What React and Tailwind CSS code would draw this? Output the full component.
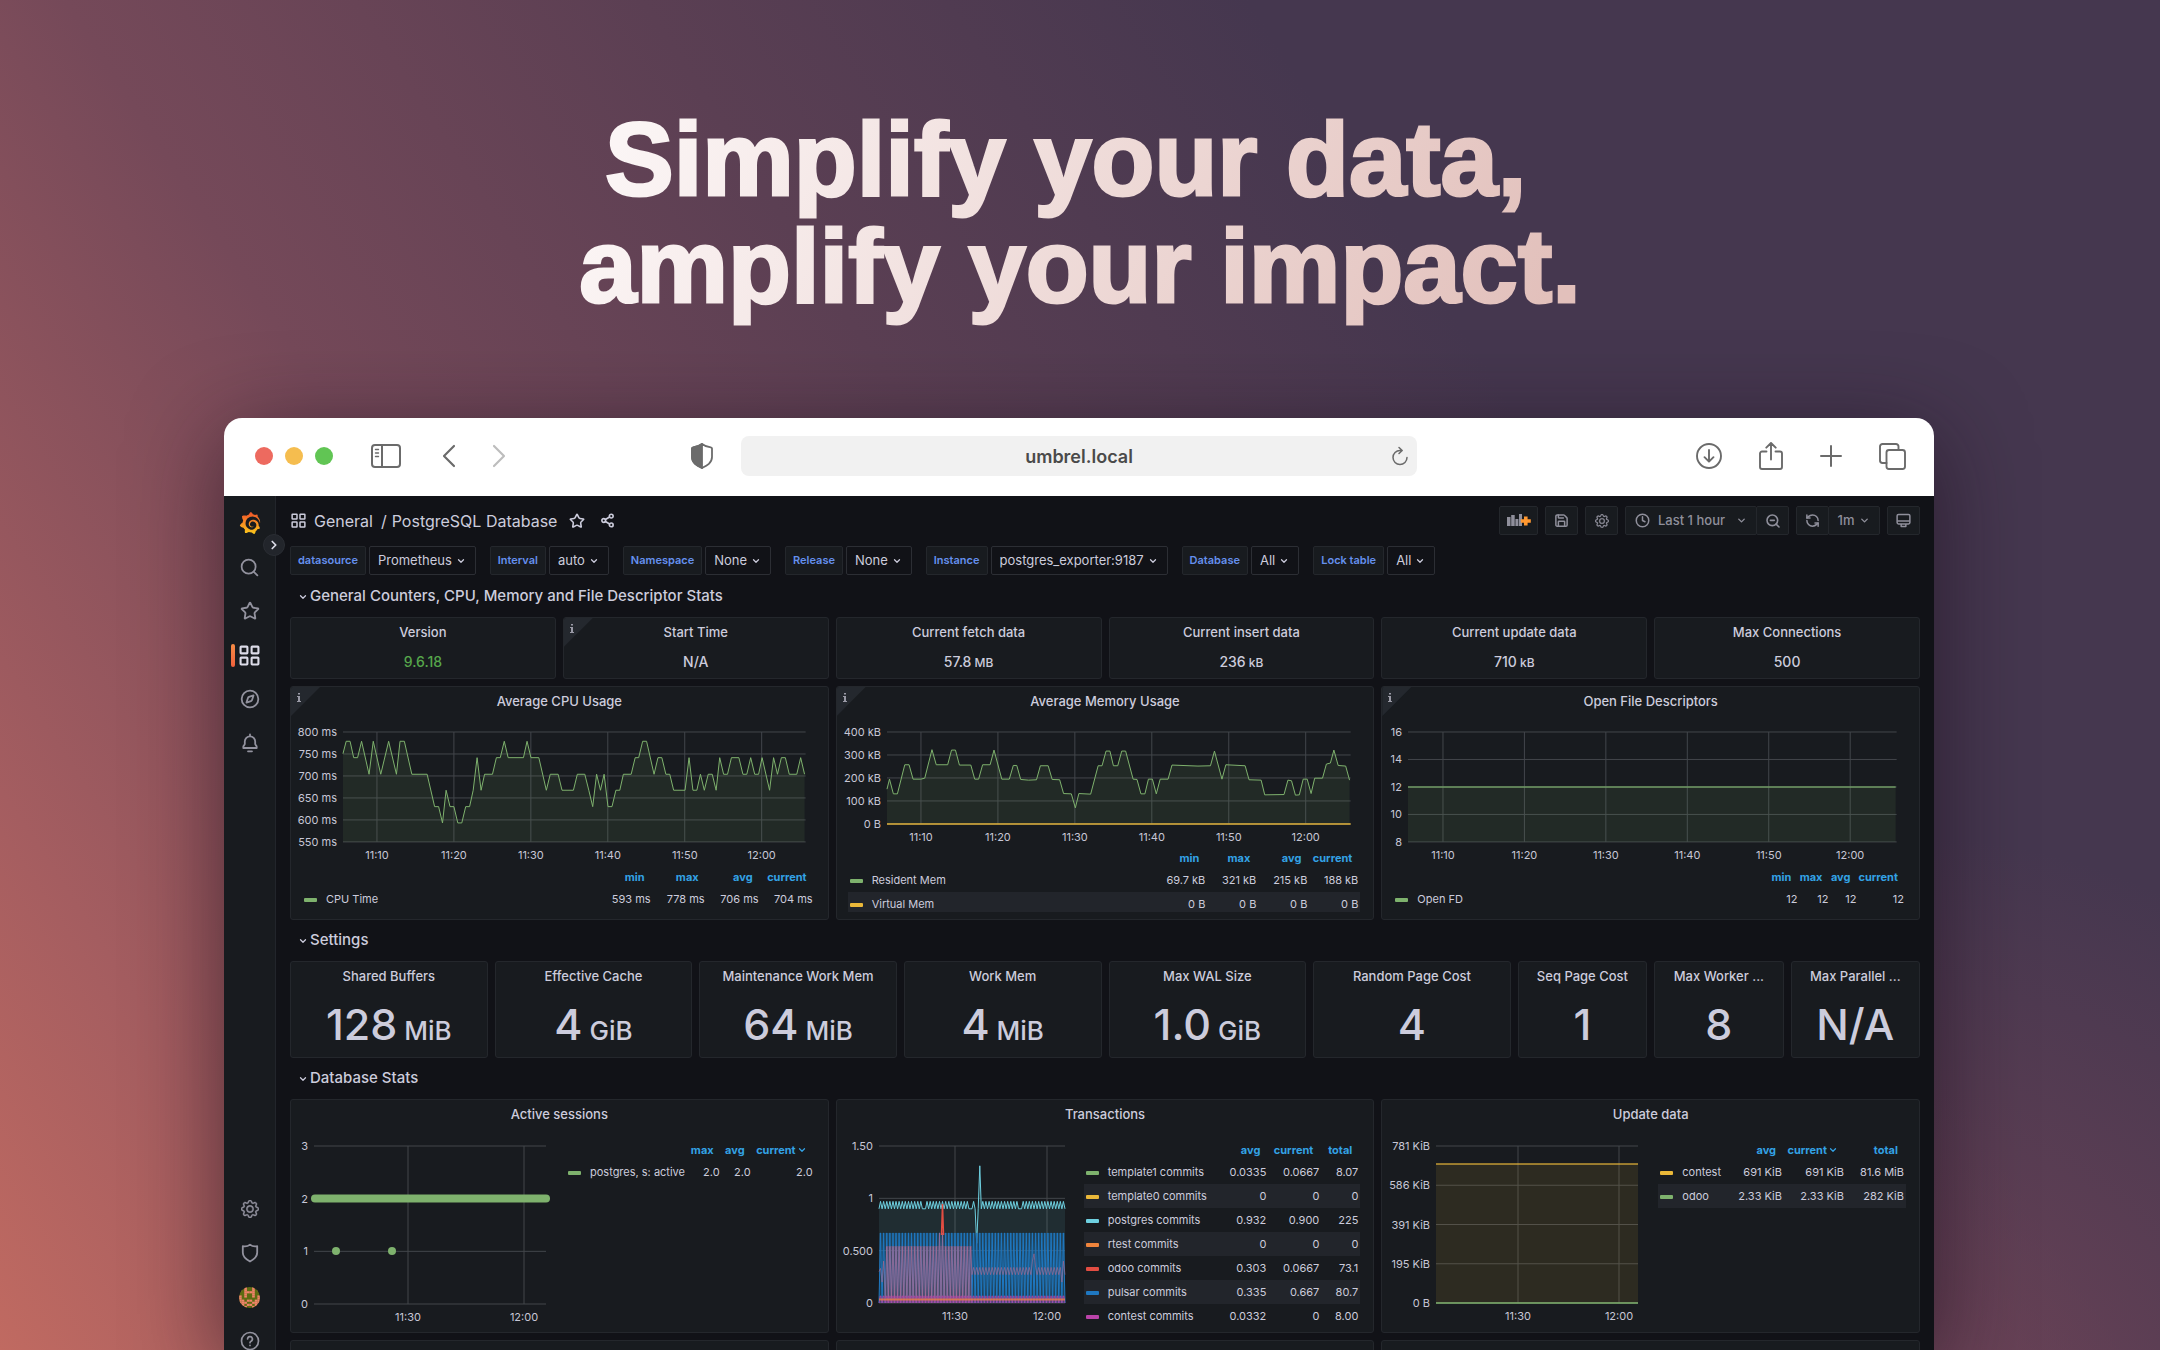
import React from "react";
import { SiGrafana } from "react-icons/si";
import { BsGear } from "react-icons/bs";
import { Search, Star, Compass, Bell, Clock, ZoomOut, RefreshCw, Share2, Save, ChevronDown, ChevronRight } from "lucide-react";

const GREEN = "#7eb26d";
const YELLOW = "#eab839";
const CYAN = "#6ed0e0";
const ORANGE = "#ef843c";
const RED = "#e24d42";
const BLUE = "#1f78c1";
const MAGENTA = "#ba43a9";
const GRID = "#42464b";

const toPoints = (text) => text.trim().split(/\s+/).map((pair) => pair.split(",").map(Number));

const CPU = toPoints(`175,222 184,185 195,185 205,234 216,234 227,185 248,284 260,185 281,284 303,185 325,284 335,185 347,185
368,284 411,284 432,381 443,381 454,430 464,332 475,381 486,381 497,430 508,430 519,381 530,381 540,332 551,234 562,332
572,284 594,284 605,234 616,234 627,185 638,234 681,234 691,185 702,234 724,234 745,332 756,284 778,284 789,332 821,332
832,284 853,284 864,332 875,381 886,284 897,332 907,284 918,381 929,381 940,332 951,332 961,284 983,284 994,234 1004,234
1015,185 1026,185 1047,284 1058,234 1069,234 1080,284 1091,284 1102,332 1134,332 1145,234 1156,332 1167,332 1177,284
1188,332 1199,284 1210,284 1221,332 1231,234 1242,284 1253,284 1264,234 1285,234 1296,284 1307,284 1318,234 1329,284
1340,284 1350,234 1371,332 1382,234 1393,284 1404,234 1415,234 1426,284 1447,284 1458,234 1469,284`);

const MEMORY = toPoints(`158,328 165,298 176,342 187,342 208,255 220,255 231,298 253,298 264,295 284,210 296,255 328,255 339,211
350,211 361,256 393,256 404,298 415,298 426,255 447,255 458,211 480,298 501,298 512,257 522,257 533,299 555,301 577,300
588,258 610,258 621,299 642,300 653,341 675,342 686,384 696,341 729,343 750,258 761,258 772,214 783,214 793,258 805,258
816,214 827,214 848,298 859,299 870,342 881,342 891,298 902,298 913,342 924,298 946,298 957,256 1030,259 1065,258 1076,214
1097,298 1108,255 1162,258 1173,300 1207,301 1217,345 1271,344 1282,301 1292,303 1303,346 1314,345 1325,298 1336,298
1347,341 1357,295 1379,295 1390,253 1401,250 1411,211 1423,257 1444,259 1455,301`);

/* Maps raw samples onto the plot rectangle of a chart. */
function project(points, [x0, x1], [y0, y1], box) {
  return points
    .map(([x, y]) => {
      const px = box.left + ((x - x0) / (x1 - x0)) * (box.right - box.left);
      const py = box.bottom - ((y - y0) / (y1 - y0)) * (box.bottom - box.top);
      return `${px.toFixed(1)},${py.toFixed(1)}`;
    })
    .join(" ");
}

function Chart({ width, height, box, yLabels, xLabels, className, label, children }) {
  const step = (box.bottom - box.top) / (yLabels.length - 1);
  return (
    <svg viewBox={`0 0 ${width} ${height}`} className={className} role="img" aria-label={label}>
      {yLabels.map((text, i) => (
        <g key={text}>
          <line x1={box.left} x2={box.right} y1={box.top + i * step} y2={box.top + i * step} stroke={GRID} />
          <text x={box.left - 6} y={box.top + i * step + 4} textAnchor="end" className="fill-[#c7c7d6] text-[11px]">
            {text}
          </text>
        </g>
      ))}
      {xLabels.map(([x, text]) => (
        <g key={text}>
          <line x1={x} x2={x} y1={box.top} y2={box.bottom} stroke={GRID} />
          <text x={x} y={box.bottom + 17} textAnchor="middle" className="fill-[#c7c7d6] text-[11px]">
            {text}
          </text>
        </g>
      ))}
      {children}
    </svg>
  );
}

function Area({ points, box, color }) {
  const end = points.split(" ").pop().split(",")[0];
  return (
    <>
      <polygon points={`${box.left},${box.bottom} ${points} ${end},${box.bottom}`} fill={color} fillOpacity="0.1" />
      <polyline points={points} fill="none" stroke={color} strokeWidth="1" strokeLinejoin="round" />
    </>
  );
}

function Panel({ title, label, span, height, info, children }) {
  return (
    <section
      aria-label={label}
      className={`relative flex min-w-0 flex-col overflow-hidden rounded-[3px] border border-[#24272c] bg-[#181b1f] ${span} ${height}`}
    >
      {info && (
        <button
          type="button"
          aria-label={`About ${title}`}
          className="absolute top-0 left-0 flex size-[29px] items-start bg-[#24282e] pt-[6px] pl-[6px] [clip-path:polygon(0_0,100%_0,0_100%)]"
        >
          <svg viewBox="0 0 4 9" className="h-[9px] w-[4px]" fill="#9a9aa6">
            <path d="M1 0h2v1.6H1zM0 3h3v5h1v1H0V8h1V4H0z" />
          </svg>
        </button>
      )}
      {title && <h3 className="shrink-0 truncate px-3 pt-[5px] text-center text-[13px] leading-[18px] font-medium">{title}</h3>}
      {children}
    </section>
  );
}

function Legend({ columns, widths, rows, className }) {
  return (
    <table className={`table-fixed border-collapse text-[11px] leading-[16px] ${className}`}>
      <colgroup>
        <col />
        {widths.map((w, i) => (
          <col key={i} className={w} />
        ))}
      </colgroup>
      <thead>
        <tr className="h-[20px]">
          <th scope="col" aria-label="series" />
          {columns.map((name) => (
            <th key={name} scope="col" className="pr-[8px] text-right font-bold whitespace-nowrap text-[#33a2e5]">
              <button type="button" className="inline-flex items-center">
                {name.replace("*", "")}
                {name.endsWith("*") && <ChevronDown className="ml-px size-[10px]" strokeWidth={3} />}
              </button>
            </th>
          ))}
        </tr>
      </thead>
      <tbody>
        {rows.map(([color, name, ...values]) => (
          <tr key={name} className="h-[24px] even:bg-[#22252b]">
            <th scope="row" className="pl-[2px] text-left font-normal whitespace-nowrap">
              <span className={`mr-[9px] inline-block h-[4px] w-[13px] rounded-[1px] align-middle ${color}`} />
              {name}
            </th>
            {values.map((value, i) => (
              <td key={i} className="pr-[2px] text-right whitespace-nowrap">
                {value}
              </td>
            ))}
          </tr>
        ))}
      </tbody>
    </table>
  );
}

function RowTitle({ children }) {
  return (
    <h2 className="col-span-full flex h-[27px] items-center pb-[2px] pl-[8px] text-[15px] leading-[20px] font-medium">
      <button type="button" className="flex items-center gap-[2px]">
        <ChevronDown className="mt-[3px] size-[10px]" strokeWidth={3} />
        {children}
      </button>
    </h2>
  );
}

function Stat({ title, value, unit, green, info }) {
  return (
    <Panel title={title} span="col-span-4" height="h-[62px]" info={info}>
      <p className={`mt-[11px] text-center text-[14px] leading-[20px] font-medium ${green ? "text-[#56a64b]" : ""}`}>
        {value}
        {unit && <span className="text-[12px]"> {unit}</span>}
      </p>
    </Panel>
  );
}

function BigStat({ title, value, unit, span }) {
  return (
    <Panel title={title} span={span} height="h-[97px]">
      <p className="mt-[13px] text-center text-[43px] leading-[52px] font-medium">
        {value}
        {unit && <span className="text-[26px]"> {unit}</span>}
      </p>
    </Panel>
  );
}

function Variable({ name, value }) {
  const id = `var-${name.replace(" ", "-")}`;
  return (
    <div className="flex gap-[3px]">
      <label htmlFor={id} className="flex h-[29px] items-center rounded-[2px] border border-[#24272c] bg-[#181b1f] px-[7px] text-[11px] font-semibold text-[#6590ee]">
        {name}
      </label>
      <div className="relative flex items-center">
        <select id={id} className="field-sizing-content h-[29px] appearance-none rounded-[2px] border border-[#2c2e34] bg-[#111217] pr-[23px] pl-[8px] text-[13px]">
          <option>{value}</option>
        </select>
        <ChevronDown className="pointer-events-none absolute right-[10px] size-[10px]" strokeWidth={3} />
      </div>
    </div>
  );
}

function Apps({ className }) {
  return (
    <svg viewBox="0 0 20 20" className={className} fill="none" stroke="currentColor" strokeWidth="2">
      <rect x="1.5" y="1.5" width="6.5" height="6.5" rx=".6" />
      <rect x="12" y="1.5" width="6.5" height="6.5" rx=".6" />
      <rect x="1.5" y="12" width="6.5" height="6.5" rx=".6" />
      <rect x="12" y="12" width="6.5" height="6.5" rx=".6" />
    </svg>
  );
}

function Avatar() {
  const cells = ["..#..#..", "#.#..#.#", "..####..", "..#..#..", "#.#..#.#", "#......#", "##.##.##", "###..###", ".#.##.#.", "..#..#.."];
  return (
    <svg viewBox="0 0 8 10" preserveAspectRatio="none" className="size-[21px] rounded-full bg-[#5d6b12]">
      {cells.map((row, y) =>
        row.split("").map((c, x) => c === "#" && <rect key={`${x}-${y}`} x={x} y={y} width="1.02" height="1.02" fill="#f0836a" />),
      )}
    </svg>
  );
}

function SideItem({ label, children, active }) {
  return (
    <a href={`#${label}`} aria-label={label} className={`relative flex h-[44px] w-full items-center justify-center ${active ? "text-[#dcdce8]" : "text-[#92929e]"}`}>
      {active && <span className="absolute left-[7px] h-[23px] w-[4px] rounded-[2px] bg-gradient-to-b from-[#f58b45] to-[#f0603c]" />}
      {children}
    </a>
  );
}

function Sidebar() {
  return (
    <nav className="relative flex w-[52px] shrink-0 flex-col border-r border-[#22252b] bg-[#181b1f] pt-[5px]">
      <SideItem label="home">
        <svg width="0" height="0" className="absolute">
          <linearGradient id="flame" x1="0" y1="0" x2="0" y2="1">
            <stop offset="0" stopColor="#f0512a" />
            <stop offset="1" stopColor="#fbc91b" />
          </linearGradient>
        </svg>
        <SiGrafana className="size-[22px]" fill="url(#flame)" />
      </SideItem>
      <SideItem label="search"><Search className="size-[21px]" strokeWidth={2} /></SideItem>
      <SideItem label="starred"><Star className="size-[20px]" strokeWidth={2.2} /></SideItem>
      <SideItem label="dashboards" active><Apps className="size-[21px]" /></SideItem>
      <SideItem label="explore"><Compass className="size-[20px]" strokeWidth={2.2} /></SideItem>
      <SideItem label="alerting">
        <svg viewBox="0 0 20 20" className="size-[20px]" fill="none" stroke="currentColor" strokeWidth="1.8" strokeLinejoin="round" strokeLinecap="round">
          <path d="M10 1.500v1.800M4.800 11V8.500a5.200 5.200 0 0 1 10.400 0V11c.3 1.200 1.500 1.600 1.500 2.800v1.200H3.300v-1.200c0-1.200 1.200-1.600 1.500-2.800zM8 18.300h4" />
        </svg>
      </SideItem>
      <button type="button" aria-label="Expand menu" className="absolute top-[38px] -right-[10px] z-10 flex size-[22px] items-center justify-center rounded-full border border-[#2a2d33] bg-[#22252b] text-[#dcdce8]">
        <ChevronRight className="size-[14px]" strokeWidth={3} />
      </button>
      <div className="mt-auto -mb-[13px]">
        <SideItem label="configuration"><BsGear className="size-[18px]" stroke="currentColor" strokeWidth="0.4" /></SideItem>
        <SideItem label="admin">
          <svg viewBox="0 0 20 20" className="size-[20px]" fill="none" stroke="currentColor" strokeWidth="1.8" strokeLinejoin="round" strokeLinecap="round">
            <path d="M10 1.6C8 3.3 5.700 3.800 2.800 3.200v6.300c0 3.900 2.800 6.700 7.200 9 4.400-2.300 7.200-5.100 7.200-9V3.200C14.300 3.800 12 3.300 10 1.600z" />
          </svg>
        </SideItem>
        <SideItem label="profile"><Avatar /></SideItem>
        <SideItem label="help">
          <svg viewBox="0 0 20 20" className="size-[20px]" fill="none" stroke="currentColor" strokeWidth="1.7" strokeLinecap="round">
            <circle cx="10" cy="10" r="8.500" />
            <path d="M7.600 8a2.400 2.400 0 1 1 3.500 2.200c-.8.4-1.100.9-1.100 1.500M10 14.300v.1" />
          </svg>
        </SideItem>
      </div>
    </nav>
  );
}

function ToolButton({ label, className, children }) {
  return (
    <button type="button" aria-label={label} className={`flex h-[29px] items-center justify-center rounded-[2px] border border-[#24272c] bg-[#181b1f] text-[13px] font-medium text-[#8f8f9b] ${className}`}>
      {children}
    </button>
  );
}

function DashboardNav() {
  return (
    <div className="flex items-center gap-[7px]">
      <h1 className="flex items-center text-[16px]">
        <Apps className="mr-[8px] ml-px size-[15px]" />
        <a href="#general">General</a>
        <span className="mr-[5px] ml-[8px]">/</span>
        <a href="#dashboard">PostgreSQL Database</a>
      </h1>
      <button type="button" aria-label="Star dashboard" className="ml-[5px]"><Star className="size-[16px]" strokeWidth={2.4} /></button>
      <button type="button" aria-label="Share dashboard" className="mr-auto ml-[8px]"><Share2 className="size-[15px]" strokeWidth={2.600} /></button>
      <ToolButton label="Add panel" className="w-[39px]">
        <svg viewBox="0 0 24 13" className="h-[13px] w-[24px]" fill="#8f8f9b">
          <path d="M0 3h3.500v9H0zM4.200 1h3.500v11H4.200zM8.400 5h3v7h-3zM12 0h3v12h-3z" />
          <path d="M17 2.500h3.600v2.700h3.200v3.600h-3.200v2.700H17V8.800h-3.200V5.200H17z" fill="#ff9830" />
        </svg>
      </ToolButton>
      <ToolButton label="Save dashboard" className="w-[33px]"><Save className="size-[15px]" strokeWidth={2.400} /></ToolButton>
      <ToolButton label="Dashboard settings" className="w-[33px]"><BsGear className="size-[14px]" stroke="currentColor" strokeWidth="0.4" /></ToolButton>
      <div className="flex">
        <ToolButton label="Time range" className="w-[132px] gap-[8px]">
          <Clock className="size-[15px]" strokeWidth={2.400} />
          Last 1 hour
          <ChevronDown className="ml-[3px] size-[11px]" strokeWidth={3} />
        </ToolButton>
        <ToolButton label="Zoom out" className="-ml-px w-[33px]"><ZoomOut className="size-[16px]" strokeWidth={2.400} /></ToolButton>
      </div>
      <div className="flex">
        <ToolButton label="Refresh" className="w-[33px]"><RefreshCw className="size-[15px] -scale-x-100" strokeWidth={2.400} /></ToolButton>
        <ToolButton label="Refresh interval" className="-ml-px w-[52px] gap-[5px]">
          1m
          <ChevronDown className="size-[11px]" strokeWidth={3} />
        </ToolButton>
      </div>
      <ToolButton label="Cycle view mode" className="w-[33px]">
        <svg viewBox="0 0 16 16" className="size-[15px]" fill="none" stroke="currentColor" strokeWidth="1.600" strokeLinejoin="round">
          <rect x="1.200" y="1.500" width="13.600" height="10.200" rx="1.500" />
          <path d="M1.200 8.600h13.600M5.500 11.800v2.600h5v-2.600" />
        </svg>
      </ToolButton>
    </div>
  );
}

function Transactions() {
  const box = { left: 42, right: 228, top: 18, bottom: 175 };
  const samples = 120;
  const px = (i) => box.left + (i * 186) / samples;
  const line = (fn) => {
    const out = [];
    for (let i = 0; i <= samples; i++) out.push(`${px(i).toFixed(1)},${(175 - fn(i) * 104.7).toFixed(1)}`);
    return out.join(" ");
  };
  const postgres = line((i) => {
    if (i === 63) return 0.57;
    if (i === 65) return 1.31;
    if (i === 64) return 0.9;
    if ([28, 29, 30, 58, 59, 60, 90, 91, 92].includes(i)) return 0.9;
    return i % 2 ? 0.97 : 0.9;
  });
  const pulsar = line((i) => (i % 2 ? 0.67 : 0));
  const odoo = line((i) => {
    if (i < 4) return [0.3, 0.33, 0.2, 0.4][i];
    if (i > 37 && i < 43) return i % 2 ? 0.67 : 0.05;
    if (i < 60) return i % 2 ? 0.54 : 0.05;
    if (i === 99) return 0.4;
    if (i === 100) return 0.47;
    if (i === 118) return 0.2;
    if (i === 119) return 0.4;
    return i % 2 ? 0.34 : 0.27;
  });
  const contest = line((i) => (i % 2 ? 0.07 : 0));
  return (
    <Chart
      width={240}
      height={204}
      box={box}
      className="w-[240px] shrink-0"
      label="Transactions over time"
      yLabels={["1.50", "1", "0.500", "0"]}
      xLabels={[[118, "11:30"], [210, "12:00"]]}
    >
      <Area points={postgres} box={box} color={CYAN} />
      <polygon points="42,175 42,105 228,105 228,175" fill={BLUE} fillOpacity="0.3" />
      <polyline points={pulsar} fill="none" stroke={BLUE} strokeWidth="1" />
      <polygon points="49,175 49,118 135,118 135,175" fill="#c0608a" fillOpacity="0.28" />
      <polyline points={odoo} fill="none" stroke="#b9698c" strokeOpacity="0.55" strokeWidth="1" />
      <polyline points="104.5,107 105.5,76 106.5,107" fill="none" stroke={RED} strokeWidth="1.5" />
      <polygon points="42,175 42,168 228,168 228,175" fill={MAGENTA} fillOpacity="0.3" />
      <polyline points={contest} fill="none" stroke={MAGENTA} strokeWidth="1" strokeOpacity="0.6" />
      <line x1="42" x2="228" y1="171.5" y2="171.5" stroke={ORANGE} strokeWidth="2" strokeOpacity="0.75" />
    </Chart>
  );
}

function Dashboard() {
  const cpu = { left: 52, right: 515, top: 18, bottom: 128 };
  const mem = { left: 50, right: 514, top: 18, bottom: 110 };
  const fd = { left: 26, right: 515, top: 18, bottom: 128 };
  const act = { left: 23, right: 255, top: 18, bottom: 176 };
  const upd = { left: 54, right: 256, top: 18, bottom: 175 };
  const times = ["11:10", "11:20", "11:30", "11:40", "11:50", "12:00"];
  return (
    <main className="flex min-w-0 flex-1 flex-col bg-[#111217] px-[14px] pt-[10px]">
      <DashboardNav />
      <div className="mt-[11px] mb-[8px] flex flex-wrap gap-[14px]">
        <Variable name="datasource" value="Prometheus" />
        <Variable name="Interval" value="auto" />
        <Variable name="Namespace" value="None" />
        <Variable name="Release" value="None" />
        <Variable name="Instance" value="postgres_exporter:9187" />
        <Variable name="Database" value="All" />
        <Variable name="Lock table" value="All" />
      </div>
      <div className="grid grid-cols-[repeat(24,minmax(0,1fr))] gap-[7px]">
        <RowTitle>General Counters, CPU, Memory and File Descriptor Stats</RowTitle>
        <Stat title="Version" value="9.6.18" green />
        <Stat title="Start Time" value="N/A" info />
        <Stat title="Current fetch data" value="57.8" unit="MB" />
        <Stat title="Current insert data" value="236" unit="kB" />
        <Stat title="Current update data" value="710" unit="kB" />
        <Stat title="Max Connections" value="500" />

        <Panel title="Average CPU Usage" span="col-span-8" height="h-[234px]" info>
          <Chart width={537} height={156} box={cpu} className="mt-[4px] w-full shrink-0" label="CPU time per interval"
            yLabels={["800 ms", "750 ms", "700 ms", "650 ms", "600 ms", "550 ms"]}
            xLabels={times.map((t, i) => [86 + i * 77, t])}>
            <Area points={project(CPU, [175, 1472], [487, 157], cpu)} box={cpu} color={GREEN} />
          </Chart>
          <Legend className="mr-[13px] ml-[11px] -mt-[3px]" columns={["min", "max", "avg", "current"]} widths={["w-[54px]", "w-[54px]", "w-[54px]", "w-[54px]"]}
            rows={[["bg-[#7eb26d]", "CPU Time", "593 ms", "778 ms", "706 ms", "704 ms"]]} />
        </Panel>

        <Panel title="Average Memory Usage" span="col-span-8" height="h-[234px]" info>
          <Chart width={537} height={138} box={mem} className="mt-[4px] w-full shrink-0" label="Memory usage over time"
            yLabels={["400 kB", "300 kB", "200 kB", "100 kB", "0 B"]}
            xLabels={times.map((t, i) => [84 + i * 77, t])}>
            <Area points={project(MEMORY, [158, 1458], [432, 157], mem)} box={mem} color={GREEN} />
            <line x1={mem.left} x2={mem.right} y1={mem.bottom} y2={mem.bottom} stroke={YELLOW} strokeOpacity="0.7" strokeWidth="2" />
          </Chart>
          <div className="mr-[13px] mb-[7px] ml-[11px] -mt-[4px] flex flex-1 overflow-hidden">
            <Legend className="h-max w-full" columns={["min", "max", "avg", "current"]} widths={["w-[51px]", "w-[51px]", "w-[51px]", "w-[51px]"]}
              rows={[
                ["bg-[#7eb26d]", "Resident Mem", "69.7 kB", "321 kB", "215 kB", "188 kB"],
                ["bg-[#eab839]", "Virtual Mem", "0 B", "0 B", "0 B", "0 B"],
              ]} />
          </div>
        </Panel>

        <Panel title="Open File Descriptors" span="col-span-8" height="h-[234px]" info>
          <Chart width={537} height={156} box={fd} className="mt-[4px] w-full shrink-0" label="Open file descriptors over time"
            yLabels={["16", "14", "12", "10", "8"]}
            xLabels={times.map((t, i) => [61 + i * 81.5, t])}>
            <rect x={fd.left} y="73" width={fd.right - fd.left - 1} height="55" fill={GREEN} fillOpacity="0.1" />
            <line x1={fd.left} x2={fd.right - 1} y1="73" y2="73" stroke={GREEN} strokeWidth="1.5" strokeOpacity="0.8" />
          </Chart>
          <Legend className="mr-[13px] ml-[11px] -mt-[3px]" columns={["min", "max", "avg", "current"]} widths={["w-[31px]", "w-[31px]", "w-[28px]", "w-[47px]"]}
            rows={[["bg-[#7eb26d]", "Open FD", "12", "12", "12", "12"]]} />
        </Panel>

        <RowTitle>Settings</RowTitle>
        <BigStat span="col-span-3" title="Shared Buffers" value="128" unit="MiB" />
        <BigStat span="col-span-3" title="Effective Cache" value="4" unit="GiB" />
        <BigStat span="col-span-3" title="Maintenance Work Mem" value="64" unit="MiB" />
        <BigStat span="col-span-3" title="Work Mem" value="4" unit="MiB" />
        <BigStat span="col-span-3" title="Max WAL Size" value="1.0" unit="GiB" />
        <BigStat span="col-span-3" title="Random Page Cost" value="4" />
        <BigStat span="col-span-2" title="Seq Page Cost" value="1" />
        <BigStat span="col-span-2" title="Max Worker ..." value="8" />
        <BigStat span="col-span-2" title="Max Parallel ..." value="N/A" />

        <RowTitle>Database Stats</RowTitle>
        <Panel title="Active sessions" span="col-span-8" height="h-[234px]">
          <div className="mt-[5px] flex items-start">
            <Chart width={265} height={204} box={act} className="w-[265px] shrink-0" label="Active sessions over time"
              yLabels={["3", "2", "1", "0"]} xLabels={[[117, "11:30"], [233, "12:00"]]}>
              <line x1="24" x2="255" y1="70.5" y2="70.5" stroke={GREEN} strokeWidth="8" strokeLinecap="round" />
              <circle cx="45" cy="123" r="4" fill={GREEN} />
              <circle cx="101" cy="123" r="4" fill={GREEN} />
            </Chart>
            <Legend className="mt-[12px] mr-[13px] ml-[10px] flex-1" columns={["max", "avg", "current*"]} widths={["w-[34px]", "w-[31px]", "w-[62px]"]}
              rows={[["bg-[#7eb26d]", "postgres, s: active", "2.0", "2.0", "2.0"]]} />
          </div>
        </Panel>
        <Panel title="Transactions" span="col-span-8" height="h-[234px]">
          <div className="mt-[5px] flex items-start">
            <Transactions />
            <Legend className="mt-[12px] mr-[13px] ml-[7px] flex-1" columns={["avg", "current", "total"]} widths={["w-[50px]", "w-[53px]", "w-[39px]"]}
              rows={[
                ["bg-[#7eb26d]", "template1 commits", "0.0335", "0.0667", "8.07"],
                ["bg-[#eab839]", "template0 commits", "0", "0", "0"],
                ["bg-[#6ed0e0]", "postgres commits", "0.932", "0.900", "225"],
                ["bg-[#ef843c]", "rtest commits", "0", "0", "0"],
                ["bg-[#e24d42]", "odoo commits", "0.303", "0.0667", "73.1"],
                ["bg-[#1f78c1]", "pulsar commits", "0.335", "0.667", "80.7"],
                ["bg-[#ba43a9]", "contest commits", "0.0332", "0", "8.00"],
              ]} />
          </div>
        </Panel>
        <Panel title="Update data" span="col-span-8" height="h-[234px]">
          <div className="mt-[5px] flex items-start">
            <Chart width={266} height={204} box={upd} className="w-[266px] shrink-0" label="Updated data over time"
              yLabels={["781 KiB", "586 KiB", "391 KiB", "195 KiB", "0 B"]} xLabels={[[136, "11:30"], [237, "12:00"]]}>
              <rect x="54" y="36" width="202" height="139" fill={YELLOW} fillOpacity="0.1" />
              <line x1="54" x2="256" y1="36" y2="36" stroke={YELLOW} strokeOpacity="0.8" strokeWidth="1.5" />
              <line x1="54" x2="256" y1="175" y2="175" stroke={GREEN} strokeWidth="1.5" />
            </Chart>
            <Legend className="mt-[12px] mr-[13px] ml-[10px] flex-1" columns={["avg", "current*", "total"]} widths={["w-[54px]", "w-[62px]", "w-[60px]"]}
              rows={[
                ["bg-[#eab839]", "contest", "691 KiB", "691 KiB", "81.6 MiB"],
                ["bg-[#7eb26d]", "odoo", "2.33 KiB", "2.33 KiB", "282 KiB"],
              ]} />
          </div>
        </Panel>

        <Panel label="Fetch data" span="col-span-8" height="h-[234px]" />
        <Panel label="Insert data" span="col-span-8" height="h-[234px]" />
        <Panel label="Lock tables" span="col-span-8" height="h-[234px]" />
      </div>
    </main>
  );
}

function BrowserBar() {
  const stroke = { fill: "none", stroke: "currentColor", strokeLinecap: "round", strokeLinejoin: "round" };
  return (
    <header className="grid h-[78px] shrink-0 grid-cols-[1fr_676px_1fr] items-center bg-white pb-[2px] text-[#6b6b6b]">
      <div className="flex items-center pr-[28px] pl-[31px]">
        <div className="flex gap-[12px]">
          <button type="button" aria-label="Close" className="size-[18px] rounded-full bg-[#ed6a5f]" />
          <button type="button" aria-label="Minimize" className="size-[18px] rounded-full bg-[#f5bd4f]" />
          <button type="button" aria-label="Maximize" className="size-[18px] rounded-full bg-[#61c554]" />
        </div>
        <button type="button" aria-label="Show sidebar" className="ml-[38px]">
          <svg viewBox="0 0 30 24" className="h-[24px] w-[30px]" strokeWidth="2" {...stroke}>
            <rect x="1" y="1" width="28" height="22" rx="3" />
            <path d="M11 1v22" />
            <path d="M4.500 5.500h3M4.500 9h3M4.500 12.500h3" strokeWidth="1.400" />
          </svg>
        </button>
        <button type="button" aria-label="Back" className="ml-[41px]">
          <svg viewBox="0 0 14 24" className="h-[24px] w-[14px]" strokeWidth="2.200" {...stroke}><path d="M12 2 2 12l10 10" /></svg>
        </button>
        <button type="button" aria-label="Forward" className="ml-[36px] text-[#bdbdbd]">
          <svg viewBox="0 0 14 24" className="h-[24px] w-[14px]" strokeWidth="2.200" {...stroke}><path d="m2 2 10 10L2 22" /></svg>
        </button>
        <button type="button" aria-label="Privacy report" className="ml-auto">
          <svg viewBox="0 0 22 26" className="h-[26px] w-[22px]" strokeWidth="1.800" {...stroke}>
            <path d="M11 1C9 2.600 5 4 2.200 4.300 1.500 4.400 1 4.900 1 5.600V14c0 6 5 8.500 10 11 5-2.500 10-5 10-11V5.600c0-.7-.5-1.200-1.200-1.300C17 4 13 2.600 11 1z" />
            <path d="M11 1C9 2.600 5 4 2.200 4.300 1.500 4.400 1 4.900 1 5.600V14c0 6 5 8.500 10 11z" fill="currentColor" />
          </svg>
        </button>
      </div>
      <div className="relative flex items-center">
        <input type="text" aria-label="Address" readOnly value="umbrel.local" className="h-[40px] w-full rounded-[8px] bg-[#f1f1f1] text-center text-[18px] font-semibold text-[#4a4a4a]" />
        <button type="button" aria-label="Reload" className="absolute right-[8px]">
          <svg viewBox="0 0 18 20" className="h-[20px] w-[18px]" strokeWidth="1.500" {...stroke}>
            <path d="M10.500 4.500H9a7 7 0 1 0 7 7M8 1.500l3.200 3L8 7.500" />
          </svg>
        </button>
      </div>
      <div className="flex items-center justify-end gap-[37px] pr-[28px]">
        <button type="button" aria-label="Downloads">
          <svg viewBox="0 0 26 26" className="size-[26px]" strokeWidth="1.900" {...stroke}><circle cx="13" cy="13" r="12" /><path d="M13 7v11.500M8.500 14.200l4.500 4.500 4.500-4.500" /></svg>
        </button>
        <button type="button" aria-label="Share">
          <svg viewBox="0 0 24 28" className="h-[28px] w-[24px]" strokeWidth="1.900" {...stroke}><path d="M7.500 9.500H3a2 2 0 0 0-2 2V25a2 2 0 0 0 2 2h18a2 2 0 0 0 2-2V11.500a2 2 0 0 0-2-2h-4.500M12 17.500V1.200M7.300 5.700 12 1l4.700 4.700" /></svg>
        </button>
        <button type="button" aria-label="New tab">
          <svg viewBox="0 0 22 22" className="size-[22px]" strokeWidth="2" {...stroke}><path d="M11 1v20M1 11h20" /></svg>
        </button>
        <button type="button" aria-label="Tab overview">
          <svg viewBox="0 0 27 27" className="size-[27px]" strokeWidth="1.900" {...stroke}><rect x="7.500" y="7" width="18.500" height="19" rx="2.500" /><path d="M7.500 20H3.500A2.500 2.500 0 0 1 1 17.500v-14A2.500 2.500 0 0 1 3.500 1H17a2.500 2.500 0 0 1 2.500 2.500V7" /></svg>
        </button>
      </div>
    </header>
  );
}

export default function App() {
  return (
    <div className="flex h-screen flex-col overflow-hidden bg-[radial-gradient(circle_at_88%_108%,rgba(125,72,90,0.75)_0%,rgba(125,72,90,0)_26%),linear-gradient(57deg,#c06a61_0%,#a45d60_12%,#754959_31%,#5b3f53_50%,#45374f_70%,#45374f_100%)] font-['Inter',sans-serif] text-[#ccccdc]">
      <p className="mx-auto mt-[106px] mb-[68px] w-max bg-[linear-gradient(115deg,#fbf5f5_5%,#e2c0bb_95%)] bg-clip-text pb-[30px] text-center font-['Liberation_Sans',sans-serif] text-[103px] leading-[107px] font-bold whitespace-pre text-transparent [-webkit-text-stroke:3px_transparent]">
        {"Simplify your data, \namplify your impact."}
      </p>
      <div className="mr-[226px] ml-[224px] flex min-h-0 flex-1 flex-col overflow-hidden rounded-t-[18px] shadow-[0_20px_90px_rgba(25,12,25,0.6)]">
        <BrowserBar />
        <div className="flex min-h-0 flex-1">
          <Sidebar />
          <Dashboard />
        </div>
      </div>
    </div>
  );
}
